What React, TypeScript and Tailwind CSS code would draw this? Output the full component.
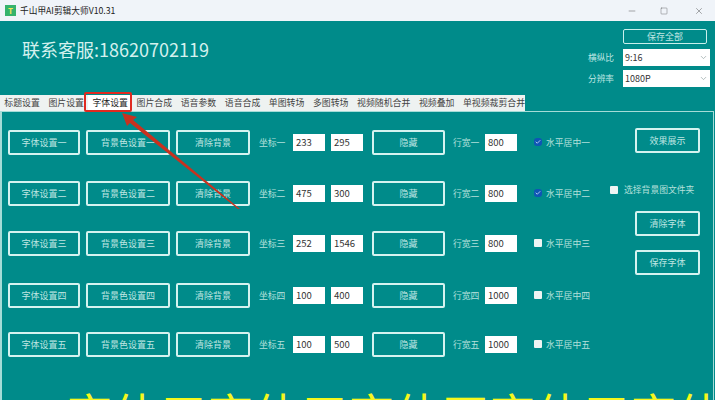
import { Minus, Square, X, ChevronDown, Check } from 'lucide-react';

const TABS = ['标题设置', '图片设置', '字体设置', '图片合成', '语音参数', '语音合成', '单图转场', '多图转场', '视频随机合并', '视频叠加', '单视频裁剪合并'];

const ROWS = [
  { n: '一', x: '233', y: '295', w: '800', on: true, h: 'h-[51px]' },
  { n: '二', x: '475', y: '300', w: '800', on: true, h: 'h-[50px]' },
  { n: '三', x: '252', y: '1546', w: '800', on: false, h: 'h-[52px]' },
  { n: '四', x: '100', y: '400', w: '1000', on: false, h: 'h-[49px]' },
  { n: '五', x: '100', y: '500', w: '1000', on: false, h: 'h-[49px]' },
];

const FONT = "font-['Noto_Sans_CJK_SC','Noto_Sans',sans-serif]";

function Btn({ label, w }: { label: string; w: string }) {
  return (
    <div className={`${w} h-[25px] shrink-0 grid place-items-center rounded-[2px] border-2 border-[#d5f3f0] text-[9px] text-[#bfe6e2]`}>
      {label}
    </div>
  );
}

function Field({ value }: { value: string }) {
  return <div className="w-[32px] h-[17px] shrink-0 bg-white pl-[3px] text-[9.5px] leading-[17px] text-[#333]">{value}</div>;
}

function Box({ on }: { on: boolean }) {
  return on ? (
    <span className="w-[8px] h-[8px] rounded-[3px] bg-[#0f55b5] grid place-items-center shrink-0">
      <Check size={6} strokeWidth={3} color="#dfe9ff" />
    </span>
  ) : (
    <span className="block w-[8px] h-[8px] rounded-[1px] bg-[#eef4f3] shrink-0"></span>
  );
}

function Select({ value }: { value: string }) {
  return (
    <div className="w-[87px] h-[17px] bg-white flex items-center justify-between pl-[2px] pr-[2px] text-[9px] text-[#333]">
      {value}
      <ChevronDown size={9} color="#9aa" />
    </div>
  );
}

export default function App() {
  return (
    <div className={`${FONT} relative w-[715px] h-[400px] overflow-hidden bg-[#008b8a]`}>
      {/* 标题栏 */}
      <div className="h-[21px] bg-[#f0f4f9] flex items-center pl-[5px]">
        <span className="w-[11px] h-[11px] bg-[#35b36c] grid place-items-center text-[8px] font-bold leading-none text-[#f5e65a]">T</span>
        <span className="ml-[4px] text-[8.7px] text-[#222]">千山甲AI剪辑大师V10.31</span>
        <div className="ml-auto flex items-center pr-[11px] text-[#333]">
          <Minus size={10} strokeWidth={1} />
          <Square size={8} strokeWidth={1} className="ml-[23px]" />
          <X size={10} strokeWidth={1} className="ml-[26px]" />
        </div>
      </div>

      {/* 头部 */}
      <div className="h-[74px] flex">
        <div className="pl-[22px] pt-[15px] text-[18px] leading-[26px] text-[#d4f1ee]">联系客服:18620702119</div>
        <div className="ml-auto w-[140px] pr-[5px] flex flex-col items-end">
          <div className="mt-[8px] mr-[3px] w-[84px] h-[15px] grid place-items-center rounded-[2px] border border-[#c9f0ec] text-[9px] leading-none text-[#bfe6e2]">保存全部</div>
          <div className="mt-[5px] flex items-center gap-[9px] text-[8.7px] text-[#bfe6e2]">横纵比<Select value="9:16" /></div>
          <div className="mt-[4px] flex items-center gap-[9px] text-[8.7px] text-[#bfe6e2]">分辨率<Select value="1080P" /></div>
        </div>
      </div>

      {/* 选项卡 */}
      <div className="h-[16px] flex w-[525px] bg-[#eef2f1] text-[8.9px] leading-[16px] text-[#444]">
        {TABS.map((t) => (
          <span key={t} className={`px-[4.3px] whitespace-nowrap ${t === '字体设置' ? 'bg-white text-[#222]' : ''}`}>{t}</span>
        ))}
      </div>

      {/* 主面板 */}
      <div className="relative ml-[1px] w-[713px] h-[289px] border-t border-r border-[#a5dcd7] pl-[7px] pt-[18px]">
        <div className="flex">
          <div className="w-[602px] shrink-0">
            {ROWS.map((r) => (
              <div key={r.n} className={`${r.h} flex items-start text-[8.8px] text-[#b5e0db]`}>
                <Btn label={`字体设置${r.n}`} w="w-[72px]" />
                <div className="w-[6px] shrink-0"></div>
                <Btn label={`背景色设置${r.n}`} w="w-[84px]" />
                <div className="w-[6px] shrink-0"></div>
                <Btn label="清除背景" w="w-[74px]" />
                <span className="ml-[9px] w-[27px] shrink-0 whitespace-nowrap leading-[25px]">坐标{r.n}</span>
                <div className="ml-[7px] mt-[4px] flex gap-[6px]">
                  <Field value={r.x} />
                  <Field value={r.y} />
                </div>
                <div className="w-[9px] shrink-0"></div>
                <Btn label="隐藏" w="w-[73px]" />
                <span className="ml-[8px] w-[27px] shrink-0 whitespace-nowrap leading-[25px]">行宽{r.n}</span>
                <div className="ml-[5px] mt-[4px]">
                  <Field value={r.w} />
                </div>
                <div className="ml-[17px] mt-[8px]">
                  <Box on={r.on} />
                </div>
                <span className="ml-[4px] whitespace-nowrap leading-[25px]">水平居中{r.n}</span>
              </div>
            ))}
          </div>
          <div className="-mt-[2px] text-[8.8px] text-[#b5e0db]">
            <div className="ml-[25px]"><Btn label="效果展示" w="w-[65px]" /></div>
            <div className="mt-[28px] h-[17px] flex items-center gap-[6px] whitespace-nowrap"><Box on={false} />选择背景图文件夹</div>
            <div className="mt-[13px] ml-[25px]"><Btn label="清除字体" w="w-[65px]" /></div>
            <div className="mt-[14px] ml-[25px]"><Btn label="保存字体" w="w-[65px]" /></div>
          </div>
        </div>
        <div className="pl-[58px] mt-[8px] whitespace-nowrap text-[47px] leading-[47px] text-[#f6f71c]">字体三字体三字体四字体五字体</div>
      </div>

      {/* 左边线 */}
      <div className="absolute left-0 top-[111px] bottom-0 w-[2px] bg-[#a5dcd7]"></div>

      {/* 标注 */}
      <div className="absolute left-[84px] top-[92px] w-[48px] h-[20px] rounded-[2px] border-2 border-[#e02a20]"></div>
      <svg className="absolute left-0 top-0 pointer-events-none" width="715" height="400" viewBox="0 0 715 400">
        <polygon points="122,113 137,117 133,120 240,209 238,209 130,123 127,126" fill="#c8321f" />
      </svg>
    </div>
  );
}
